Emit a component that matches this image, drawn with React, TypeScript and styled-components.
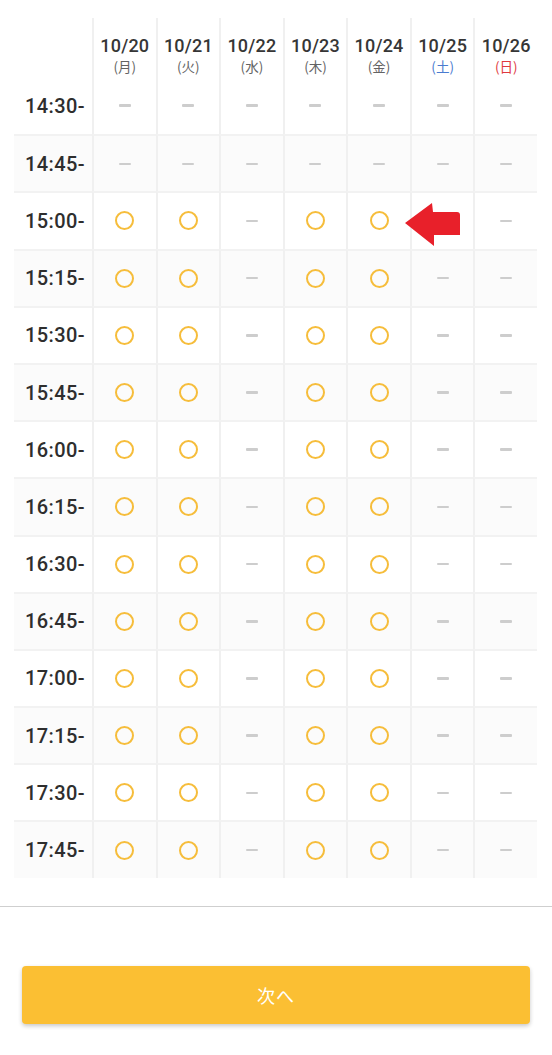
import React from 'react'
import styled, { createGlobalStyle } from 'styled-components'

const GlobalStyle = createGlobalStyle`
  html, body {
    margin: 0;
    padding: 0;
    background: #ffffff;
    font-family: Roboto, "Noto Sans CJK JP", sans-serif;
    color: #333333;
  }
`

const days = [
  { date: '10/20', label: '(月)', kind: 'weekday' },
  { date: '10/21', label: '(火)', kind: 'weekday' },
  { date: '10/22', label: '(水)', kind: 'weekday' },
  { date: '10/23', label: '(木)', kind: 'weekday' },
  { date: '10/24', label: '(金)', kind: 'weekday' },
  { date: '10/25', label: '(土)', kind: 'sat' },
  { date: '10/26', label: '(日)', kind: 'sun' },
]

const times = [
  '14:30', '14:45', '15:00', '15:15', '15:30', '15:45', '16:00',
  '16:15', '16:30', '16:45', '17:00', '17:15', '17:30', '17:45',
]

// open slots by weekday index, from 15:00 on
const openDays = [0, 1, 3, 4]

const isOpen = (time: string, day: number) =>
  time >= '15:00' && openDays.includes(day)

const Page = styled.div`
  width: 552px;
  min-height: 1055px;
  display: flex;
  flex-direction: column;
`

const Table = styled.div`
  margin: 18px 15px 0 14px;
  display: grid;
  grid-template-columns: 78px repeat(7, 1fr);
`

const HeadCorner = styled.div`
  height: 59px;
`

const HeadCell = styled.div`
  height: 59px;
  border-left: 2px solid #f0f0f0;
  display: flex;
  flex-direction: column;
  align-items: center;
  padding-top: 17px;
  box-sizing: border-box;
`

const DateText = styled.div`
  font-size: 18px;
  font-weight: 500;
  color: #363636;
  line-height: 21px;
  letter-spacing: 0.2px;
`

const DayText = styled.div<{ $kind: string }>`
  font-family: "Noto Sans CJK JP", sans-serif;
  font-size: 13.5px;
  line-height: 17px;
  margin-top: 2px;
  color: ${({ $kind }) =>
    $kind === 'sat' ? '#4a7bd0' : $kind === 'sun' ? '#e0393e' : '#636363'};
`

const TimeCell = styled.div<{ $striped: boolean; $first: boolean }>`
  height: 57.2px;
  box-sizing: border-box;
  border-top: ${({ $first }) => ($first ? 'none' : '2px solid #f2f2f2')};
  background: ${({ $striped }) => ($striped ? '#fbfbfb' : '#ffffff')};
  display: flex;
  align-items: center;
  justify-content: flex-end;
  padding-right: 7px;
  font-size: 20px;
  font-weight: 500;
  color: #2e2e2e;
  letter-spacing: 0.4px;
`

const SlotCell = styled.div<{ $striped: boolean; $first: boolean }>`
  position: relative;
  height: 57.2px;
  box-sizing: border-box;
  border-top: ${({ $first }) => ($first ? 'none' : '2px solid #f2f2f2')};
  border-left: 2px solid #f0f0f0;
  background: ${({ $striped }) => ($striped ? '#fbfbfb' : '#ffffff')};
  display: flex;
  align-items: center;
  justify-content: center;
`

const Circle = styled.span`
  width: 19px;
  height: 19px;
  box-sizing: border-box;
  border: 2px solid #f6bd3b;
  border-radius: 50%;
`

const Dash = styled.span`
  width: 12px;
  height: 2.5px;
  background: #cdcdcd;
  border-radius: 1px;
`

const Pointer = styled.svg`
  position: absolute;
  left: -7px;
  top: 10px;
  width: 55px;
  height: 43px;
`

const Divider = styled.div`
  margin-top: 28px;
  height: 1px;
  background: #cfcfcf;
`

const Footer = styled.div`
  padding: 59px 22px 0;
`

const NextButton = styled.button`
  width: 100%;
  height: 58px;
  border: none;
  border-radius: 4px;
  background: #fbbf33;
  box-shadow: 0 2px 4px rgba(0, 0, 0, 0.22);
  color: #ffffff;
  font-family: "Noto Sans CJK JP", sans-serif;
  font-size: 18px;
  letter-spacing: 1px;
`

const RedArrow = () => (
  <Pointer viewBox="0 0 55 43">
    <path
      d="M0 20 L27 0 L28 9 L52 9 Q55 9 55 12 L55 32 L29 32 L29 43 Z"
      fill="#e8202a"
    />
  </Pointer>
)

const App: React.FunctionComponent = () => {
  return (
    <>
      <GlobalStyle />
      <Page>
        <Table>
          <HeadCorner />
          {days.map((d) => (
            <HeadCell key={d.date}>
              <DateText>{d.date}</DateText>
              <DayText $kind={d.kind}>{d.label}</DayText>
            </HeadCell>
          ))}
          {times.map((t, row) => (
            <React.Fragment key={t}>
              <TimeCell $striped={row % 2 === 1} $first={row === 0}>
                {t}-
              </TimeCell>
              {days.map((d, col) => (
                <SlotCell key={d.date} $striped={row % 2 === 1} $first={row === 0}>
                  {isOpen(t, col) ? <Circle /> : <Dash />}
                  {t === '15:00' && col === 5 && <RedArrow />}
                </SlotCell>
              ))}
            </React.Fragment>
          ))}
        </Table>
        <Divider />
        <Footer>
          <NextButton>次へ</NextButton>
        </Footer>
      </Page>
    </>
  )
}

export default App
